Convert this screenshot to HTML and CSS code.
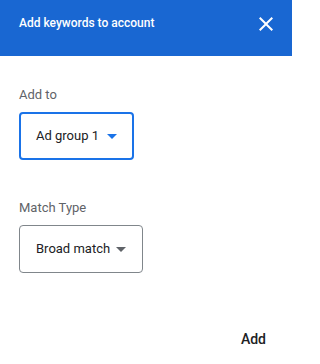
FILE: index.html
```html
<!DOCTYPE html>
<html>
<head>
<meta charset="utf-8">
<link rel="stylesheet" href="styles.css">
</head>
<body>
<div class="dialog">
  <header class="header">
    <h1 class="title">Add keywords to account</h1>
    <button class="close" aria-label="Close">
      <svg viewBox="0 0 24 24" width="24" height="24"><path fill="#fff" d="M19 6.41 17.59 5 12 10.59 6.41 5 5 6.41 10.59 12 5 17.59 6.41 19 12 13.41 17.59 19 19 17.59 13.41 12z"/></svg>
    </button>
  </header>
  <main class="content">
    <div class="field">
      <div class="label">Add to</div>
      <div class="select select-active">
        <span class="select-text">Ad group 1</span>
        <span class="arrow arrow-blue"></span>
      </div>
    </div>
    <div class="field field-second">
      <div class="label">Match Type</div>
      <div class="select select-plain">
        <span class="select-text">Broad match</span>
        <span class="arrow"></span>
      </div>
    </div>
  </main>
  <footer class="actions">
    <button class="add">Add</button>
  </footer>
</div>
</body>
</html>
```
FILE: styles.css
```css
html, body {
  margin: 0;
  padding: 0;
  background: #fff;
}
body {
  font-family: Roboto, "Liberation Sans", Arial, sans-serif;
  width: 292px;
  height: 364px;
  overflow: hidden;
}
.dialog {
  display: flex;
  flex-direction: column;
}
.header {
  height: 56px;
  box-sizing: border-box;
  background: #1967d2;
  display: flex;
  align-items: flex-start;
  justify-content: space-between;
  padding: 12px 14px 0 19px;
}
.title {
  margin: 0;
  font-size: 12px;
  font-weight: 500;
  line-height: 20px;
  color: #fff;
  padding-top: 1px;
}
.close {
  background: none;
  border: none;
  padding: 0;
  width: 24px;
  height: 24px;
  display: block;
}
.close svg {
  display: block;
}
.content {
  padding: 31px 19px 0 19px;
  display: flex;
  flex-direction: column;
}
.field {
  display: flex;
  flex-direction: column;
  align-items: flex-start;
}
.field-second {
  margin-top: 40px;
}
.label {
  font-size: 13px;
  line-height: 16px;
  color: #5f6368;
  margin-bottom: 9px;
}
.select {
  box-sizing: border-box;
  height: 48px;
  display: flex;
  align-items: center;
  gap: 8px;
  padding: 0 16px 0 16px;
  border: 1px solid #80868b;
  border-radius: 4px;
}
.select-active {
  border: 2px solid #1a73e8;
  padding: 0 15px 0 15px;
}
.select-plain {
  gap: 6px;
}
.select-text {
  font-size: 13px;
  color: #202124;
  line-height: 20px;
}
.arrow {
  width: 0;
  height: 0;
  border-left: 5px solid transparent;
  border-right: 5px solid transparent;
  border-top: 5px solid #5f6368;
}
.arrow-blue {
  border-top-color: #1a73e8;
}
.actions {
  display: flex;
  justify-content: flex-end;
  padding: 56px 18px 0 0;
}
.add {
  background: none;
  border: none;
  padding: 0 8px;
  font-family: inherit;
  font-size: 14px;
  font-weight: 500;
  line-height: 20px;
  color: #202124;
}
```
